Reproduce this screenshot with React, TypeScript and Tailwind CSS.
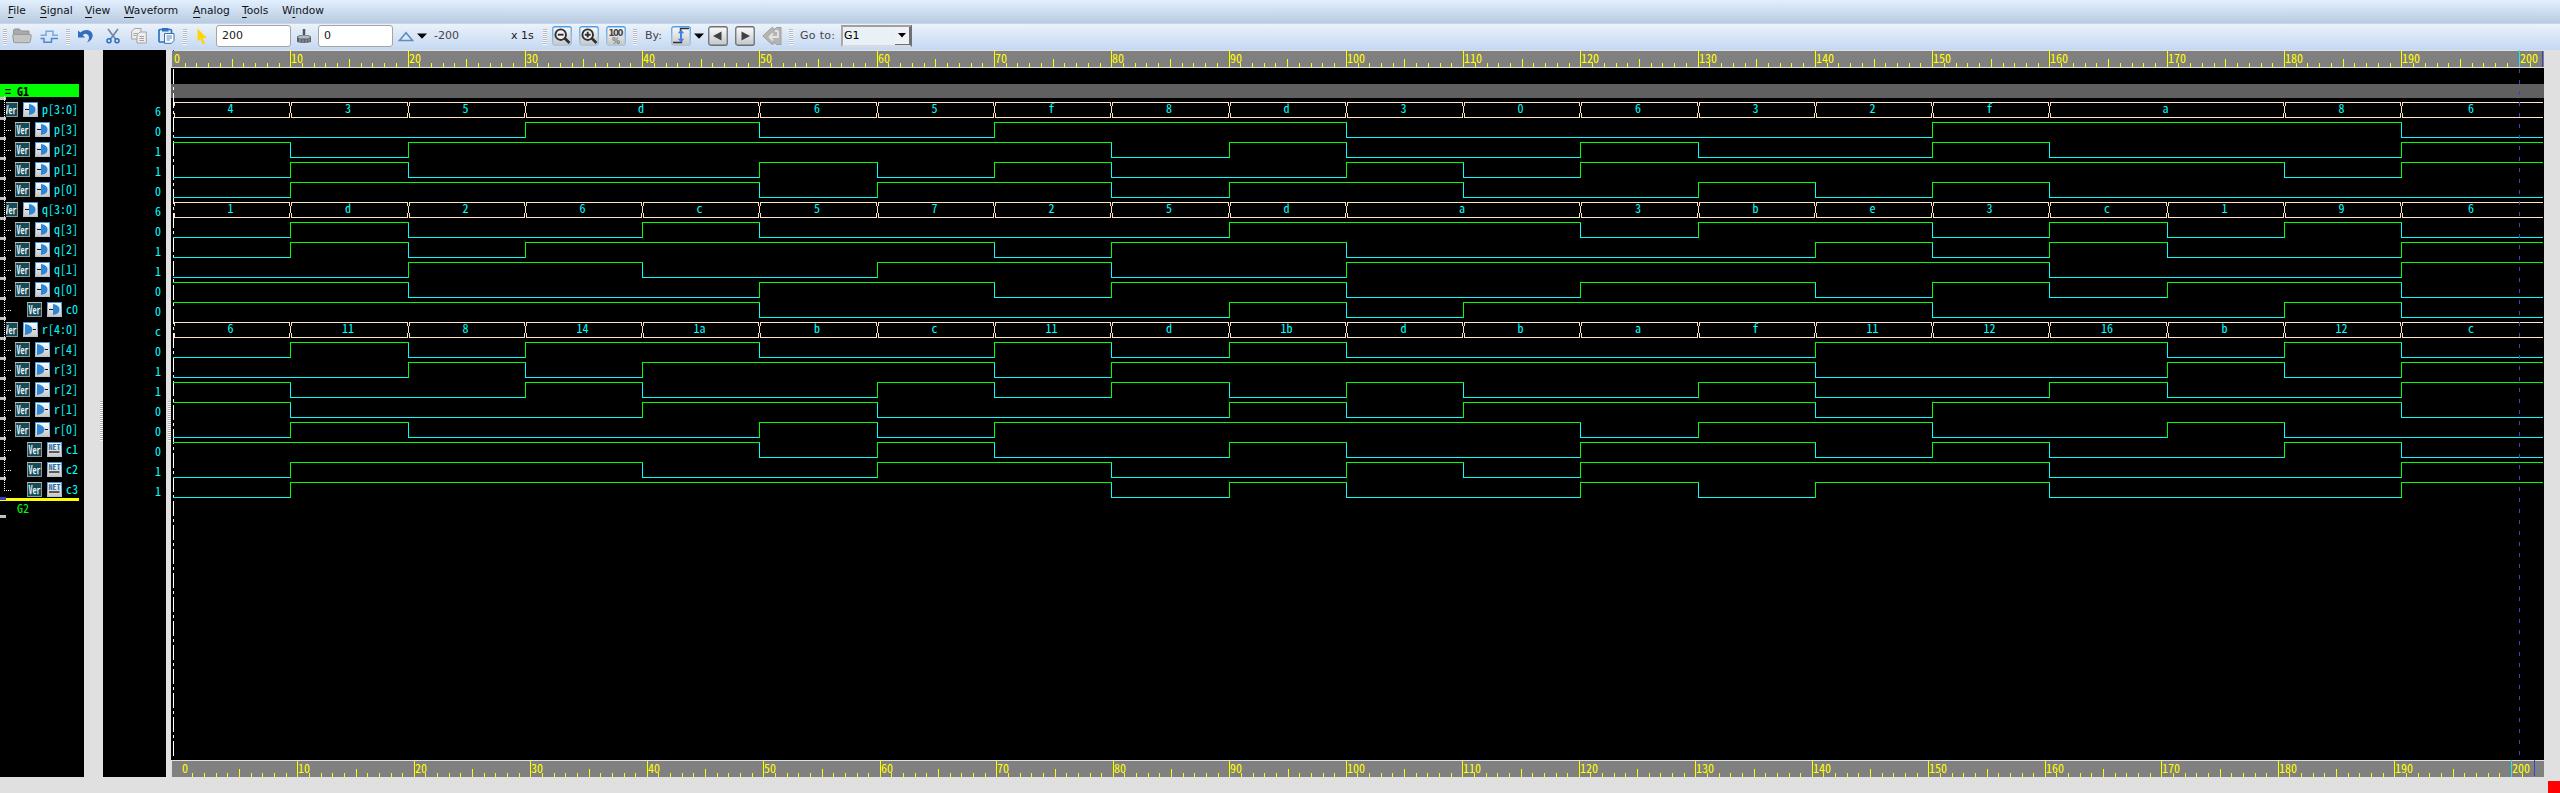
import React from "react";

const MONO = "font-['Noto_Sans_Mono_CJK_SC','Noto_Sans_Mono_CJK_JP','Liberation_Mono',monospace]";

const P = "4 3 5 d d 6 5 f 8 d 3 0 6 3 2 f a a 8 6".split(" ");
const Q = "1 d 2 6 c 5 7 2 5 d a a 3 b e 3 c 1 9 6".split(" ");
const R = "6 11 8 14 1a b c 11 d 1b d b a f 11 12 16 b 12 c".split(" ");
const hex = (s: string) => parseInt(s, 16);
const bit = (v: string[], n: number) => v.map((s) => (hex(s) >> n) & 1);
const CIN = R.map((s, i) => hex(s) - hex(P[i]) - hex(Q[i]));
const carry = (n: number) => {
  const m = (1 << n) - 1;
  return R.map((_, i) => ((hex(P[i]) & m) + (hex(Q[i]) & m) + CIN[i]) >> n);
};

type Kind = "in" | "out" | "net";
type Signal = { name: string; kind: Kind; level: 0 | 1 | 2; value: string; bus?: string[]; bits?: number[] };

const line = (name: string, kind: Kind, level: 1 | 2, bits: number[]): Signal => ({
  name,
  kind,
  level,
  bits,
  value: String(bits[bits.length - 1]),
});

const SIGNALS: Signal[] = [
  { name: "p[3:0]", kind: "in", level: 0, value: "6", bus: P },
  ...[3, 2, 1, 0].map((n) => line(`p[${n}]`, "in", 1, bit(P, n))),
  { name: "q[3:0]", kind: "in", level: 0, value: "6", bus: Q },
  ...[3, 2, 1, 0].map((n) => line(`q[${n}]`, "in", 1, bit(Q, n))),
  line("c0", "in", 2, CIN),
  { name: "r[4:0]", kind: "out", level: 0, value: "c", bus: R },
  ...[4, 3, 2, 1, 0].map((n) => line(`r[${n}]`, "out", 1, bit(R, n))),
  ...[1, 2, 3].map((n) => line(`c${n}`, "net", 2, carry(n))),
];

const WAVE_END = 2543;
const tx = (t: number) => (t >= 200 ? WAVE_END : Math.round(173 + t * 11.728));

/* ---------- toolbar ---------- */

const MENU = [
  { t: "File", k: 0, w: "w-8" },
  { t: "Signal", k: 0, w: "w-[45px]" },
  { t: "View", k: 0, w: "w-[39px]" },
  { t: "Waveform", k: 0, w: "w-[69px]" },
  { t: "Analog", k: 0, w: "w-[49px]" },
  { t: "Tools", k: 0, w: "w-10" },
  { t: "Window", k: 1, w: "w-12" },
];

function MenuBar() {
  return (
    <div className="flex h-[23px] items-center bg-linear-to-b from-[#e2efff] to-[#b9cbdf] pl-2 text-[10.67px] leading-4 text-[#101418]">
      {MENU.map((m) => (
        <div key={m.t} className={`${m.w} -mt-0.5 shrink-0`}>
          {m.t.slice(0, m.k)}
          <span className="underline decoration-1 underline-offset-[3px]">{m.t[m.k]}</span>
          {m.t.slice(m.k + 1)}
        </div>
      ))}
    </div>
  );
}

function Grip({ className }: { className: string }) {
  return (
    <svg className={`shrink-0 ${className}`} width="4" height="16" shapeRendering="crispEdges">
      {[0, 2, 4, 6, 8, 10, 12, 14].map((y) => (
        <React.Fragment key={y}>
          <rect y={y} width="4" height="1" fill="#b4b9c2" />
          <rect y={y + 1} width="4" height="1" fill="#f8fafc" />
        </React.Fragment>
      ))}
    </svg>
  );
}

function DropArrow({ className }: { className: string }) {
  return (
    <svg className={`shrink-0 ${className}`} width="10" height="6">
      <path d="M0 0.5h10L5 5.8z" fill="#000" />
    </svg>
  );
}

function Field({ value, className }: { value: string; className: string }) {
  return (
    <div className={`h-[22px] w-[75px] shrink-0 rounded-[3px] border border-[#a4a4a4] bg-white pl-[5px] leading-5 text-[#202020] ${className}`}>
      {value}
    </div>
  );
}

function SquareButton({ blue, className, children }: { blue?: boolean; className: string; children: React.ReactNode }) {
  return (
    <svg className={`shrink-0 ${className}`} width="20" height="20" viewBox="0 0 20 20">
      <defs>
        <linearGradient id="face" x1="0" y1="0" x2="0" y2="1">
          <stop offset="0" stopColor="#fafafa" />
          <stop offset="1" stopColor="#c4c8cc" />
        </linearGradient>
        <linearGradient id="edge" x1="0" y1="0" x2="0" y2="1">
          <stop offset="0" stopColor="#4f9fe8" />
          <stop offset="1" stopColor="#b4c4d4" />
        </linearGradient>
      </defs>
      <rect x="0.75" y="0.75" width="18.5" height="18.5" rx="2" fill="url(#face)" stroke={blue ? "url(#edge)" : "#6f6f6f"} strokeWidth="1.3" />
      {children}
    </svg>
  );
}

function Magnifier({ plus }: { plus?: boolean }) {
  return (
    <>
      <path d="M12.5 12l5 5" stroke="#303030" strokeWidth="2.6" />
      <circle cx="8.7" cy="8.7" r="5.3" fill="#f2f2f2" stroke="#303030" strokeWidth="1.9" />
      <path d={plus ? "M5.8 8.7h5.8M8.7 5.8v5.8" : "M5.8 8.7h5.8"} stroke="#303030" strokeWidth="1.9" />
    </>
  );
}

function Toolbar() {
  return (
    <div className="flex h-[27px] items-center border-t border-[#c2d5f2] bg-linear-to-b from-[#ebf2f9] to-[#c5d8f2] pb-[2px] text-[11px] text-[#202020]">
      <Grip className="ml-[3px] mt-px" />
      <svg className="ml-[5px] shrink-0" width="20" height="16" viewBox="0 0 20 16">
        <path d="M1.5 14V2.5q0-1.5 1.5-1.5h4.5l1.5 2h8v11z" fill="#a9a9a9" stroke="#929292" />
        <path d="M.7 7.5q0-1 1-1h16.6q1 0 1 1l-1 6q-.2 1.2-1.3 1.2H3q-1.200-.1-1.300-1.200z" fill="#c4c4c4" stroke="#9a9a9a" />
      </svg>
      <svg className="ml-2 shrink-0" width="18" height="15" viewBox="0 0 18 15" fill="none">
        <path d="M.5 6.300H6V2.200H13V6.300H18" stroke="#76abe2" strokeWidth="1.500" />
        <path d="M.5 9.600H4V13.200H11.500V9.600H18" stroke="#4f88cc" strokeWidth="1.500" />
      </svg>
      <Grip className="ml-2 mt-px" />
      <svg className="ml-[7px] shrink-0" width="17" height="16" viewBox="0 0 17 16">
        <path d="M1 2.500L1 9.500H8L5.700 7Q9.500 4.500 11.500 7.500Q13 10.500 10 14.500Q16 11.500 15.700 7Q14.500 1.800 9 2Q5.500 2.300 3.400 4.600Z" fill="#2f6fbe" />
      </svg>
      <svg className="ml-3 shrink-0" width="14" height="16" viewBox="0 0 14 16" fill="none">
        <path d="M2 1l7.500 10M12 1L4.500 11" stroke="#6d87a8" strokeWidth="1.700" />
        <circle cx="3" cy="12.700" r="2" stroke="#2d6bc0" strokeWidth="1.500" />
        <circle cx="11" cy="12.700" r="2" stroke="#2d6bc0" strokeWidth="1.500" />
      </svg>
      <svg className="ml-[11px] shrink-0" width="17" height="16" viewBox="0 0 17 16" fill="#efefef" stroke="#a2a2a2">
        <path d="M.7 3.500l3-3H10V11H.7z" />
        <path d="M2.500 5.500h4M2.500 7.500h3" />
        <path d="M6 7l3-3h6.300v11H6z" />
        <path d="M8.500 8.500h4.500M8.500 10.500h4.500M8.500 12.500h4.500" />
      </svg>
      <svg className="ml-2.5 shrink-0" width="17" height="16" viewBox="0 0 17 16">
        <rect x="1" y="1.500" width="12.500" height="12.500" rx="1" fill="#dfeaf6" stroke="#2f73c2" strokeWidth="1.700" />
        <rect x="4" y="0" width="6.500" height="3.500" fill="#2f73c2" />
        <path d="M6.500 5.500h9.500v7L13.500 15.300h-7z" fill="#fff" stroke="#3a70b0" />
        <path d="M8.500 8h5.500M8.500 10h5.500M8.500 12h3.500" stroke="#5a87bb" />
      </svg>
      <Grip className="ml-2 mt-px" />
      <svg className="ml-2.5 shrink-0" width="11" height="17" viewBox="0 0 11 17">
        <path d="M.5 0.500V13.500L3.400 10.800L5.800 16.300L8 15.300L5.600 10H9.800z" fill="#ffd500" />
      </svg>
      <Field value="200" className="ml-2" />
      <svg className="ml-[5px] shrink-0" width="16" height="16" viewBox="0 0 16 16">
        <path d="M8 1v7" stroke="#4d545c" strokeWidth="2.500" />
        <path d="M1 8.500L4 7h8l3 1.500V14q-7 2-14 0z" fill="#59616b" />
        <path d="M1.500 9l3-1.500h7l3 1.500l-2 1.500h-9z" fill="#b3b8bd" />
        <path d="M4 11v3M7 11.500v3M10 11.500v3M13 11v2.500" stroke="#a4a9af" />
      </svg>
      <Field value="0" className="ml-1.5" />
      <svg className="ml-[5px] shrink-0" width="16" height="11" viewBox="0 0 16 11">
        <path d="M1.500 9.500L8 1.800L14.500 9.500z" fill="#dbe8f6" stroke="#628bc0" strokeWidth="1.600" />
      </svg>
      <DropArrow className="ml-[3px]" />
      <span className="ml-[7px] w-[77px] shrink-0 text-[#42464c]">-200</span>
      <span className="w-8 shrink-0">x 1s</span>
      <Grip className="mt-px" />
      <SquareButton blue className="ml-[5px]">
        <Magnifier />
      </SquareButton>
      <SquareButton blue className="ml-[7px]">
        <Magnifier plus />
      </SquareButton>
      <SquareButton blue className="ml-[7px]">
        <text x="10" y="9.500" textAnchor="middle" textLength="15" className="text-[8.500px] font-bold" fill="#444">100</text>
        <text x="10" y="17.500" textAnchor="middle" className="text-[8px] font-bold" fill="#777">%</text>
      </SquareButton>
      <Grip className="ml-[7px] mt-px" />
      <span className="ml-2 w-[26px] shrink-0 text-[#42464c]">By:</span>
      <SquareButton blue className="">
        <path d="M2 16.500h8.500V14M9.500 5V2.500H18" fill="none" stroke="#303030" strokeWidth="1.400" />
        <path d="M10 3.500l3.200 3.700H11v5.600h2.200L10 16.500l-3.200-3.700H9V7.200H6.800z" fill="#3f7fe8" />
      </SquareButton>
      <DropArrow className="ml-[3px]" />
      <SquareButton className="ml-1">
        <path d="M13.500 5.500v9L5 10z" fill="#404040" />
      </SquareButton>
      <SquareButton className="ml-[7px]">
        <path d="M6.500 5.500v9L15 10z" fill="#404040" />
      </SquareButton>
      <svg className="ml-[7px] shrink-0" width="20" height="20" viewBox="0 0 20 20">
        <path d="M.8 10L10 1.500L12 2.500V4L14.500 1.500H19V18.500H14.500L12 16V17.500L10 18.500z" fill="#b4b4b4" stroke="#a0a0a0" />
        <path d="M16 5v6H8.500M11 7.500L7.500 11L11 14.500M13 5h3" fill="none" stroke="#e4e4e4" strokeWidth="1.800" />
      </svg>
      <Grip className="ml-[7px] mt-px" />
      <span className="ml-[7px] w-[41px] shrink-0 tracking-[0.300px] text-[#42464c]">Go to:</span>
      <div className="flex h-[22px] w-[71px] shrink-0 border-2 border-t-[#a0a0a0] border-l-[#a8a8a8] border-r-[#707070] border-b-[#d8dce0] bg-[#e9f0f6] pl-px leading-[18px]">
        <span className="grow text-black">G1</span>
        <span className="flex w-[15px] items-center justify-center border-r border-b border-[#707070] bg-[#eef2f6]">
          <svg width="8" height="5">
            <path d="M0 0h8L4 4.500z" />
          </svg>
        </span>
      </div>
    </div>
  );
}

/* ---------- signal list ---------- */

function VerBadge() {
  return (
    <svg className="shrink-0" width="15" height="15" viewBox="0 0 15 15">
      <rect width="15" height="15" fill="#8d9a9c" />
      <rect width="15" height="1" fill="#b5bcbc" />
      <rect x="1" y="1" width="13" height="13" fill="#134b59" />
      <text x="1.500" y="11.500" textLength="12" lengthAdjust="spacingAndGlyphs" className={`${MONO} text-[11px]`} fill="#ffffff" stroke="#ffffff" strokeWidth="0.250">Ver</text>
    </svg>
  );
}

function KindIcon({ kind }: { kind: Kind }) {
  return (
    <svg className="shrink-0" width="15" height="15" viewBox="0 0 15 15">
      <defs>
        <linearGradient id="tile" x1="0" y1="0" x2="0" y2="1">
          <stop offset="0" stopColor="#ffffff" />
          <stop offset="1" stopColor="#c6c6c6" />
        </linearGradient>
        <linearGradient id="tileEdge" x1="0" y1="0" x2="0" y2="1">
          <stop offset="0" stopColor="#3f97e6" />
          <stop offset="1" stopColor="#b4c2d0" />
        </linearGradient>
      </defs>
      <rect x="0.500" y="0.500" width="14" height="14" fill="url(#tile)" stroke="url(#tileEdge)" />
      {kind === "in" && (
        <>
          <path d="M6 2q6.500 1 6.500 5.500T6 13z" fill="#2f86d4" />
          <path d="M2 7.500h4" stroke="#181818" />
        </>
      )}
      {kind === "out" && (
        <>
          <path d="M2 2q7 1 7.500 5.500Q9 12 2 13z" fill="#2f86d4" />
          <path d="M10 7.500h3" stroke="#181818" />
        </>
      )}
      {kind === "net" && (
        <>
          <text x="1.500" y="7.500" textLength="12" lengthAdjust="spacingAndGlyphs" className={`${MONO} text-[7px] font-bold`} fill="#2a6a9c">NET</text>
          <path d="M2 10h10.500" stroke="#222" strokeWidth="1.400" />
        </>
      )}
    </svg>
  );
}

const INDENT = ["-ml-[12px] pl-[15px]", "pl-[15px]", "pl-[27px]"];

function SignalPane() {
  return (
    <div className={`relative w-[84px] shrink-0 overflow-hidden bg-black pt-[34px] text-[12px] ${MONO}`}>
      <div className="h-[13px] w-[79px] bg-[#00ff00] pl-[5px] leading-[13px] font-bold whitespace-pre text-black">= G1</div>
      <div className="pt-[5px]">
        {SIGNALS.map((s) => (
          <div key={s.name} className={`flex h-5 gap-[5px] ${INDENT[s.level]}`}>
            <VerBadge />
            <KindIcon kind={s.kind} />
            <span className="-ml-px leading-[14px] whitespace-pre text-[#00ffff]">{s.name}</span>
          </div>
        ))}
      </div>
      <div className="pl-[17px] leading-[12px] text-[#00ff00]">G2</div>
      <svg className="absolute top-0 left-0" width="84" height="480" viewBox="0 50 84 480" shapeRendering="crispEdges">
        {SIGNALS.map((s, i) => (
          <React.Fragment key={s.name}>
            {s.level === 0 && <rect x="0" y={100 + i * 20} width="6" height="18" fill="#000" />}
            <rect x="0" y={97 + i * 20} width="6" height="3" fill="#c0c0c0" />
            {s.level > 0 && <path d={`M6 ${110.5 + i * 20}h6`} stroke="#fff" strokeDasharray="1 1" />}
          </React.Fragment>
        ))}
        <path d="M4.500 96V491" stroke="#fff" strokeDasharray="1 1" />
        <rect x="0" y="498" width="79" height="3" fill="#ffff00" />
        <rect x="0" y="497" width="6" height="3" fill="#4040c0" />
        <rect x="0" y="515" width="6" height="3" fill="#c0c0c0" />
      </svg>
    </div>
  );
}

function Splitter({ className }: { className: string }) {
  return (
    <div className={`flex shrink-0 justify-end bg-[#e0e0e0] pt-[351px] ${className}`}>
      <svg width="3" height="40" shapeRendering="crispEdges">
        <rect width="3" height="40" fill="#fafafa" />
        <path d="M1.500 0V40" stroke="#b0b0b0" strokeWidth="3" strokeDasharray="1 1" />
      </svg>
    </div>
  );
}

function ValuePane() {
  return (
    <div className={`w-[63px] shrink-0 bg-black pt-[54px] pr-[5px] text-right text-[12px] leading-[14px] text-[#00ffff] ${MONO}`}>
      {SIGNALS.map((s) => (
        <div key={s.name} className="h-5">
          {s.value}
        </div>
      ))}
    </div>
  );
}

/* ---------- waveforms ---------- */

function Ruler({ origin, step, end, bottom }: { origin: number; step: number; end: number; bottom?: boolean }) {
  const ticks = Array.from({ length: 202 }, (_, t) => t).slice(1);
  const at = (t: number) => Math.round(origin + t * step);
  return (
    <svg className="block shrink-0" width="2373" height={bottom ? 17 : 18} viewBox={`171 0 2373 ${bottom ? 17 : 18}`} shapeRendering="crispEdges">
      <rect x="171" width="2373" height="18" fill="#e0e0e0" />
      <rect x="172" y="1" width="2372" height="16" fill="#808080" />
      {ticks.map((t) => {
        const h = t % 10 === 0 ? 17 : t % 5 === 0 ? 8 : 4;
        return <rect key={t} x={at(t)} y={17 - h} width="1" height={h} fill={t === 200 ? "#20e8f0" : "#ffff00"} />;
      })}
      <rect x={at(0)} y="0" width="1" height="1" fill={bottom ? "#ffff00" : "#404040"} />
      {Array.from({ length: 21 }, (_, i) => (
        <text key={i} x={at(i * 10) + 1} y="13" className={`${MONO} text-[12px]`} fill="#ffff00">
          {i * 10}
        </text>
      ))}
      <rect x={end} y={bottom ? 0 : 1} width="1" height="16" fill="#4040c0" />
    </svg>
  );
}

function BusWave({ values, y }: { values: string[]; y: number }) {
  const runs: { v: string; a: number; b: number }[] = [];
  values.forEach((v, i) => {
    const last = runs[runs.length - 1];
    if (last && last.v === v) last.b = (i + 1) * 10;
    else runs.push({ v, a: i * 10, b: (i + 1) * 10 });
  });
  return (
    <>
      {runs.map((r) => {
        const a = tx(r.a) + 1;
        const b = r.b === 200 ? WAVE_END : tx(r.b);
        return (
          <React.Fragment key={r.a}>
            <g fill="#ffe4c4">
              <rect x={a} y={y} width={b - a} height="1" />
              <rect x={a} y={y + 15} width={b - a} height="1" />
              <rect x={a} y={y} width="1" height="4" />
              <rect x={a} y={y + 11} width="1" height="5" />
              {r.b < 200 && (
                <>
                  <rect x={b - 1} y={y} width="1" height="4" />
                  <rect x={b - 1} y={y + 11} width="1" height="5" />
                  <rect x={b} y={y + 4} width="1" height="7" />
                </>
              )}
            </g>
            <text x={(a + b) / 2 - 1.5} y={y + 11} textAnchor="middle" className={`${MONO} text-[12px]`} fill="#00ffff">
              {r.v}
            </text>
          </React.Fragment>
        );
      })}
    </>
  );
}

function BitWave({ bits, y }: { bits: number[]; y: number }) {
  return (
    <>
      {bits.map((v, i) => {
        const a = tx(i * 10);
        const b = tx((i + 1) * 10);
        const color = v ? "#00ff00" : "#00ffff";
        const edge = i > 0 && bits[i - 1] !== v;
        return (
          <g key={i} fill={color}>
            <rect x={a} y={v ? y : y + 15} width={b - a + (v && b < WAVE_END ? 1 : 0)} height="1" />
            {edge && <rect x={a} y={v ? y : y + 1} width="1" height={v ? 16 : 15} />}
          </g>
        );
      })}
    </>
  );
}

function WavePane() {
  return (
    <div className="flex w-[2373px] shrink-0 flex-col">
      <Ruler origin={173} step={11.728} end={2542} />
      <svg className="block shrink-0 bg-black" width="2373" height="692" viewBox="171 68 2373 692" shapeRendering="crispEdges">
        <rect x="171" y="84" width="2373" height="14" fill="#606060" />
        <path d="M173.500 69V756" stroke="#fff" strokeDasharray="15 3 3 3" />
        {SIGNALS.map((s, i) =>
          s.bus ? <BusWave key={s.name} values={s.bus} y={102 + i * 20} /> : <BitWave key={s.name} bits={s.bits ?? []} y={102 + i * 20} />
        )}
        <path d="M2519.500 69V756" stroke="#4040c0" strokeDasharray="4 7" />
      </svg>
      <Ruler origin={180.800} step={11.650} end={2534} bottom />
    </div>
  );
}

export default function App() {
  return (
    <div className="flex h-[793px] w-[2560px] flex-col overflow-hidden bg-[#e0e0e0] font-['DejaVu_Sans',sans-serif]">
      <MenuBar />
      <Toolbar />
      <div className="flex h-[727px] shrink-0">
        <SignalPane />
        <Splitter className="w-[19px]" />
        <ValuePane />
        <Splitter className="w-[5px]" />
        <WavePane />
      </div>
      <div className="flex grow items-end justify-end">
        <div className="size-3 bg-[#ff0000]" />
      </div>
    </div>
  );
}
